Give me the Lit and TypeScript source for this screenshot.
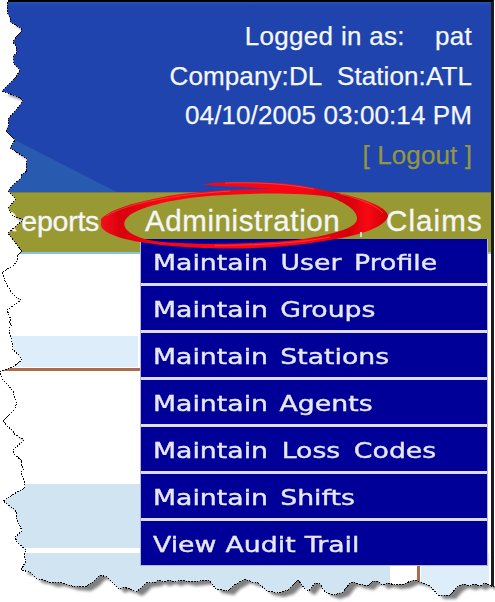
import { LitElement, html, css, svg } from "lit";
import { customElement } from "lit/decorators.js";
import { styleMap } from "lit/directives/style-map.js";

const EDGE =
  "8,2 7,6 8,14 10,18 10,22 21,28 21,32 16,37 13,42 16,46 16,50 17,53 13,56 14,64 20,70 16,77 10,83 2,91 16,96 23,100 20,105 16,110 8,119 9,124 6,131 15,140 10,148 18,153 27,159 26,167 27,171 21,175 21,178 13,185 8,191 16,199 8,208 12,215 23,220 17,225 8,233 13,240 22,251 17,256 17,261 13,266 2,272 5,281 11,292 16,297 21,300 7,310 11,320 9,323 12,325 9,328 10,335 13,345 12,349 19,355 22,360 13,367 5,370 0,372 2,379 6,383 13,391 14,395 17,403 14,410 3,421 7,426 13,431 13,433 24,440 13,450 14,454 22,461 21,465 24,469 21,472 24,480 25,488 17,492 3,501 15,510 17,514 16,518 20,526 22,531 15,537 17,542 26,550 24,556 26,561 21,570 30,572 37,579 44,580 52,583 58,582 66,584 72,586 85,587 93,582 100,575 107,577 119,589 123,587 130,589 136,592 140,589 146,583 156,582 158,580 164,582 170,580 175,582 181,580 190,582 209,580 216,589 228,591 234,585 245,579 252,582 258,583 267,591 278,593 288,590 298,580 305,589 309,591 315,583 320,584 325,592 334,595 343,592 350,583 354,582 358,584 368,586 373,581 378,581 382,585 388,583 395,585 404,584 413,580 421,582 430,586 438,595 450,595 457,587 463,584 470,586 475,584 480,586 485,583 491,586 495,586";

interface Entry {
  label: string;
  gap: number;
}

@customElement("app-root")
export class AppRoot extends LitElement {
  static styles = css`
    :host {
      display: block;
      position: relative;
      width: 495px;
      height: 602px;
      overflow: hidden;
      background: #fff;
      font-family: "Liberation Sans", Arial, sans-serif;
      color: #f4f6f8;
    }
    .window {
      box-sizing: border-box;
      height: 602px;
      border-top: 2px solid #000;
      border-right: 3px solid #1c1c1c;
      margin-right: 1px;
      display: flex;
      flex-direction: column;
    }
    header {
      position: relative;
      box-sizing: border-box;
      height: 190px;
      padding: 15px 19px 0 0;
      background: linear-gradient(#2850b8, #1f44ae 4px);
      display: flex;
      flex-direction: column;
      align-items: flex-end;
      font-size: 26px;
      line-height: 39.6px;
      letter-spacing: 0.1px;
      white-space: pre;
      -webkit-text-stroke: 0.25px currentColor;
    }
    .user {
      letter-spacing: 0.3px;
    }
    .swoosh {
      position: absolute;
      left: 0;
      bottom: 0;
      width: 130px;
      height: 60px;
    }
    .logout {
      color: #94963f;
    }
    nav {
      box-sizing: border-box;
      height: 62px;
      flex: none;
      border-top: 1px solid #777d45;
      border-bottom: 2px solid #86c5e2;
      background: #999933;
      display: flex;
      align-items: flex-start;
      font-size: 29.5px;
      line-height: 56px;
      white-space: nowrap;
      -webkit-text-stroke: 0.35px currentColor;
    }
    .reports {
      width: 145px;
      box-sizing: border-box;
      font-size: 28.5px;
      letter-spacing: -0.25px;
      text-indent: -3px;
    }
    .initial {
      margin-right: 4px;
    }
    .admin {
      width: 241px;
      letter-spacing: 0.6px;
    }
    .claims {
      letter-spacing: 1.1px;
    }
    .page {
      flex: 1;
      display: flex;
      flex-direction: column;
    }
    .gap1 { height: 82px; }
    .row1 { height: 31px; width: 138px; background: #deedfa; }
    .rule { height: 3px; width: 140px; margin-top: 1px; background: #ac6a4f; }
    .gap2 { height: 113px; }
    .row2 { height: 64px; width: 390px; background: #d1e4f1; }
    .foot {
      margin-top: 5px;
      flex: 1;
      display: grid;
      grid-template-columns: 390px 27px 3px 1px 68px;
    }
    .c1 { background: #d1e4f1; }
    .c3 { background: #ac6a4f; }
    .c5 { background: #deedfa; }
    .menu {
      position: absolute;
      left: 140px;
      top: 239px;
      width: 348px;
      box-sizing: border-box;
      border: solid #b4b4e4;
      border-width: 0 1px 1px;
      background: #dcdcf5;
      display: flex;
      flex-direction: column;
      gap: 3px;
      font: 22px/48px "DejaVu Sans", Verdana, sans-serif;
      color: #e6e7f0;
      -webkit-text-stroke: 0.4px currentColor;
    }
    .item {
      height: 44px;
      overflow: hidden;
      background: #000099;
      padding-left: 12px;
      white-space: nowrap;
    }
    .label {
      display: inline-block;
      transform: scaleX(1.215);
      transform-origin: 0 50%;
    }
    .overlay {
      position: absolute;
      inset: 0;
    }
  `;

  private entries: Entry[] = [
    { label: "Maintain User Profile", gap: 3.3 },
    { label: "Maintain Groups", gap: 3 },
    { label: "Maintain Stations", gap: 3 },
    { label: "Maintain Agents", gap: 2.5 },
    { label: "Maintain Loss Codes", gap: 4.2 },
    { label: "Maintain Shifts", gap: 3 },
    { label: "View Audit Trail", gap: 0.5 },
  ];

  private ring() {
    return svg`
      <path fill="url(#red)" fill-rule="evenodd" d="
        M202 184.500C215 181.500 250 182 275 183C300 184 318 189 338 193C362 198 388 207 388 216
        C386 226 363 235 330 240C298 246 262 248.500 228 248.500C190 248.500 150 245 125 239
        C107 234 101 229 101 225V219C110 209 137 202 168 196C198 191 235 189 272 189
        C246 186.500 224 187 202 184.500Z
        M330 197C295 192 240 193 198 197C163 201 133 209 126 219C119 229 134 239 163 242
        C200 245 255 244 296 240C325 236 351 230 356 222C361 213 347 203 330 197Z"/>
      <path fill="none" stroke="#ff6a66" stroke-width="1" opacity=".5" d="M106 216C128 203 173 195 230 191M340 194C361 199 377 206 383 213M225 183C268 182 292 185 314 189M330 237C300 243 255 245.500 215 245.500"/>`;
  }

  render() {
    return html`
      <div class="window">
        <header>
          <svg class="swoosh" viewBox="0 0 130 60">
            <path d="M0 2L15 8L117 60H0Z" fill="#285ab0" />
          </svg>
          <div class="user">Logged in as:${"\u00a0\u00a0\u00a0\u00a0"}pat</div>
          <div>Company:DL${"\u00a0\u00a0"}Station:ATL</div>
          <div>04/10/2005 03:00:14 PM</div>
          <div class="logout">[ Logout ]</div>
        </header>
        <nav>
          <div class="reports"><span class="initial">R</span>eports</div>
          <div class="admin">Administration</div>
          <div class="claims">Claims</div>
        </nav>
        <div class="page">
          <div class="gap1"></div>
          <div class="row1"></div>
          <div class="rule"></div>
          <div class="gap2"></div>
          <div class="row2"></div>
          <div class="foot">
            <div class="c1"></div><div></div><div class="c3"></div><div></div><div class="c5"></div>
          </div>
        </div>
      </div>
      <div class="menu">
        ${this.entries.map(
          (e) => html`<div class="item">
            <span class="label" style=${styleMap({ wordSpacing: `${e.gap}px` })}>${e.label}</span>
          </div>`
        )}
      </div>
      <svg class="overlay" width="495" height="602" viewBox="0 0 495 602">
        <defs>
          <linearGradient id="red" x1="0" x2="1">
            <stop offset="0" stop-color="#f5101c" />
            <stop offset=".07" stop-color="#d8000c" />
            <stop offset=".2" stop-color="#f80612" />
            <stop offset=".7" stop-color="#f80612" />
            <stop offset=".86" stop-color="#d6000a" />
            <stop offset=".93" stop-color="#fa0812" />
            <stop offset="1" stop-color="#cc0008" />
          </linearGradient>
          <clipPath id="outside"><path d="M0 0H8L${EDGE}V602H0Z" /></clipPath>
          <filter id="soft" x="-5%" y="-5%" width="110%" height="110%">
            <feGaussianBlur stdDeviation="1.8" />
          </filter>
        </defs>
        ${this.ring()}
        <path d="M361 232V237" stroke="#d8d8cc" stroke-width="2" />
        <g clip-path="url(#outside)">
          <rect width="495" height="602" fill="#fff" />
          <path d="M8 -9L${EDGE}V-9Z" transform="translate(6 4)" fill="#000" opacity=".5" filter="url(#soft)" />
        </g>
        <polyline points=${EDGE} fill="none" stroke="#000" stroke-width="1" stroke-dasharray="1.6 1.2"
          shape-rendering="crispEdges" />
      </svg>
    `;
  }
}
